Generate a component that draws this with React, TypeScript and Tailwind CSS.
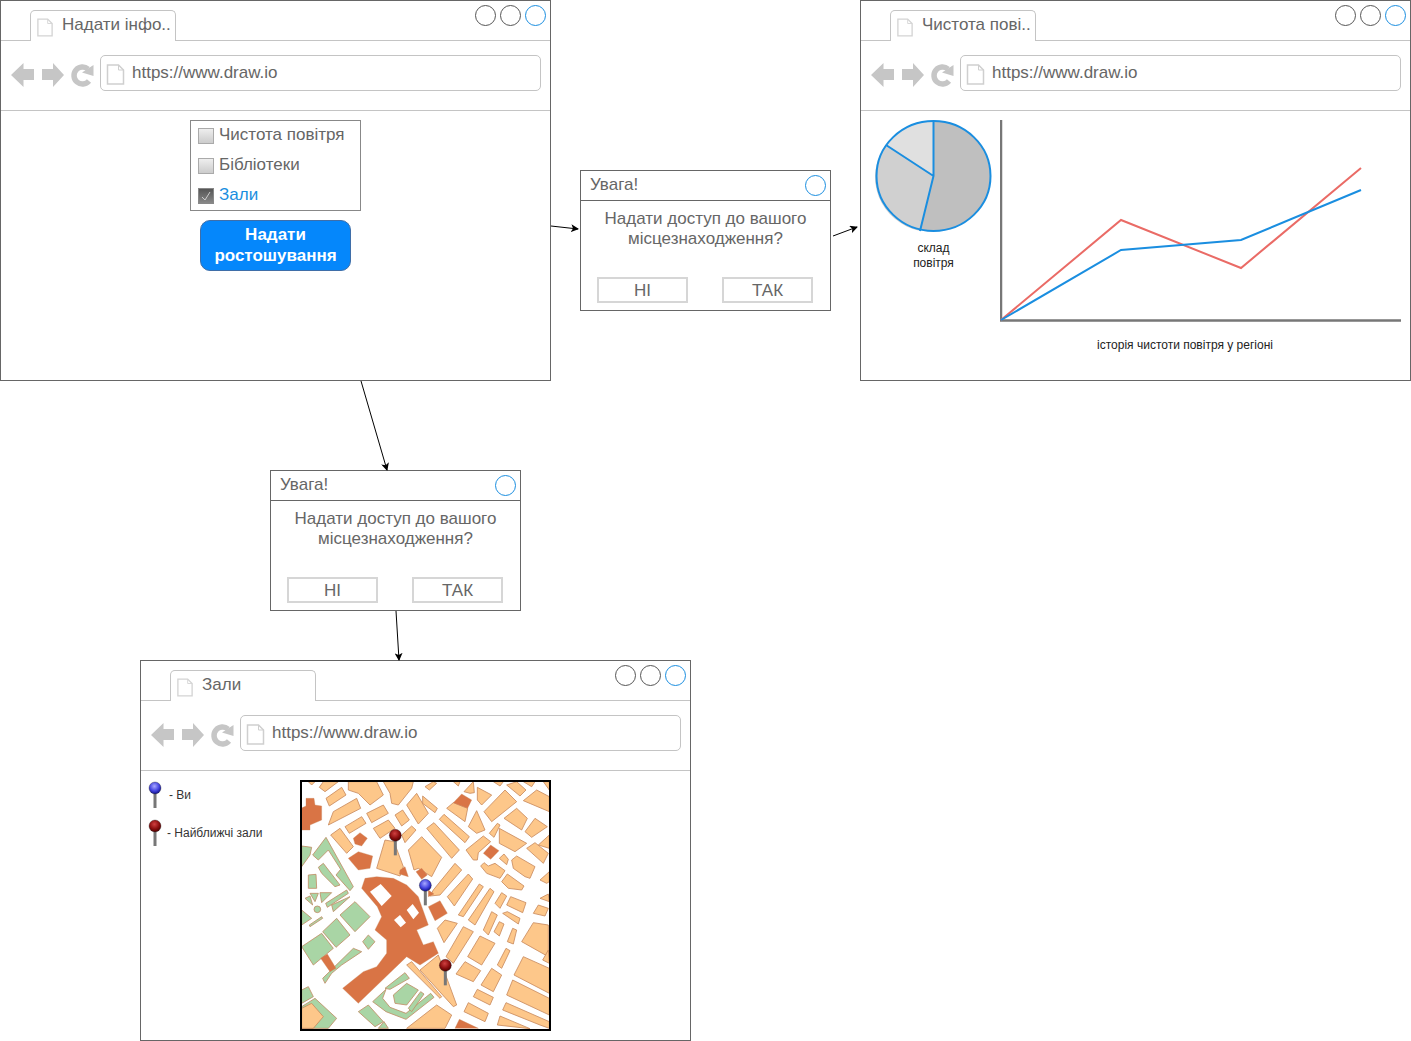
const font = '[font-family:"Liberation_Sans",Arial,sans-serif]'

function DocIcon({ className, color = '#d4d4d4' }: { className: string; color?: string }) {
  return (
    <svg className={className} viewBox="0 0 18 21" fill="none">
      <path d="M1 1H12L17 6V20H1Z" fill="#fff" stroke={color} strokeWidth="1.5" />
      <path d="M12 1V6H17" stroke={color} strokeWidth="1" />
    </svg>
  )
}

function NavIcons() {
  return (
    <svg className="shrink-0" width="89" height="30" viewBox="0 0 89 30" fill="#c6c6c6">
      <path d="M0 15 12.500 3V9H23V20H12.500V27Z" />
      <path d="M31 9H42V3L53 15 42 27V20H31Z" />
      <path d="M77 9A8.500 8.500 0 1 0 78 21" fill="none" stroke="#c6c6c6" strokeWidth="5.500" />
      <path d="M71 12.500 82.500 5V16Z" />
    </svg>
  )
}

function BrowserWindow({
  className,
  title,
  children,
}: {
  className: string
  title: string
  children: React.ReactNode
}) {
  return (
    <div className={`absolute flex flex-col border border-[#666] bg-white ${className}`}>
      <div className="relative flex h-[40px] shrink-0 border-b border-[#c4c4c4]">
        <div className="z-10 ml-[29px] mt-[9px] flex h-[31px] w-[146px] items-center gap-[9px] rounded-t-[5px] border border-b-0 border-[#c4c4c4] bg-white pl-[6px]">
          <DocIcon className="h-[21px] w-[16px] shrink-0 translate-y-[1px]" />
          <span className="mb-[4px] whitespace-nowrap text-[17px] leading-none text-[#666]">{title}</span>
        </div>
        <div className="absolute right-[4px] top-[4px] flex gap-[4px]">
          <span className="size-[21px] rounded-full border border-[#555]" />
          <span className="size-[21px] rounded-full border border-[#555]" />
          <span className="size-[21px] rounded-full border border-[#1a8ee0]" />
        </div>
      </div>
      <div className="flex h-[70px] shrink-0 items-start gap-0 border-b border-[#c4c4c4] pl-[10px] pt-[14px]">
        <div className="mt-[5px] flex h-[30px] w-[89px]">
          <NavIcons />
        </div>
        <div className="flex h-[36px] w-[441px] items-center gap-[7px] rounded-[5px] border border-[#c4c4c4] bg-white pl-[5px]">
          <DocIcon className="h-[21px] w-[19px] shrink-0 translate-y-[1px]" color="#cfcfcf" />
          <span className="mb-[2px] text-[17px] leading-none text-[#666]">https://www.draw.io</span>
        </div>
      </div>
      <div className="min-h-0 flex-1">{children}</div>
    </div>
  )
}

function AlertDialog({ className }: { className: string }) {
  return (
    <div className={`absolute flex flex-col border border-[#666] bg-white ${className}`}>
      <div className="flex h-[30px] shrink-0 items-center justify-between border-b border-[#666] pl-[9px] pr-[4px]">
        <span className="mb-[2px] text-[17px] leading-none text-[#666]">Увага!</span>
        <span className="size-[21px] rounded-full border border-[#1a8ee0]" />
      </div>
      <p className="mt-[8px] text-center text-[17px] leading-[20px] text-[#666]">
        Надати доступ до вашого
        <br />
        місцезнаходження?
      </p>
      <div className="mt-[28px] flex justify-between pl-[16px] pr-[17px]">
        <button className="flex h-[26px] w-[91px] items-center justify-center border-2 border-[#d6d6d6] pt-[2px] text-[17px] text-[#666]">
          НІ
        </button>
        <button className="flex h-[26px] w-[91px] items-center justify-center border-2 border-[#d6d6d6] pt-[2px] text-[17px] text-[#666]">
          ТАК
        </button>
      </div>
    </div>
  )
}

function CheckItem({ label, checked }: { label: string; checked?: boolean }) {
  return (
    <div className="flex h-[30px] items-center gap-[5px] pl-[7px]">
      {checked ? (
        <span className="flex size-[16px] items-center justify-center border border-[#888] bg-gradient-to-b from-[#555] to-[#888]">
          <svg width="12" height="12" viewBox="0 0 12 12" fill="none">
            <path d="M2 7 5 10 10 2" stroke="#ccc" strokeWidth="1" />
          </svg>
        </span>
      ) : (
        <span className="size-[16px] border border-[#aaa] bg-gradient-to-b from-[#eee] to-[#ccc]" />
      )}
      <span className={`mb-[4px] text-[17px] leading-none ${checked ? 'text-[#1a8ee0]' : 'text-[#666]'}`}>{label}</span>
    </div>
  )
}

const light = [
  '55,35 75,35 65,45', '100,35 145,35 105,65 88,52', '175,35 260,35 280,75 240,105 205,70 175,60',
  '280,35 370,35 365,55 325,105 305,100 300,70', '405,50 430,35 440,40 418,60', '490,35 510,35 505,48',
  '522,65 550,35 553,68 540,70', '562,52 605,75 575,105 562,90', '610,35 640,35 630,48',
  '650,45 680,35 708,60 690,78', '700,35 735,35 725,50', '760,35 778,35 778,60',
  '582,125 645,60 680,95 605,155', '700,92 740,60 778,80 778,125', '642,145 680,115 712,145 695,180',
  '705,185 735,145 772,170 725,202', '745,225 778,195 778,235', '108,85 155,52 168,75 118,108',
  '115,165 130,125 200,85 212,115', '230,130 280,105 295,130 245,158', '165,170 215,140 228,160 178,190',
  '250,175 295,150 315,175 270,205', '315,135 338,120 358,150 335,168', '122,195 150,175 190,230 170,250',
  '335,195 365,168 378,180 345,218', '350,105 380,70 415,130 385,162', '398,78 442,115 435,128 398,100',
  '470,115 490,98 533,115 525,155', '448,148 462,133 538,200 525,218', '410,175 432,158 508,240 485,265',
  '355,240 395,200 455,262 425,320 385,295 372,300', '260,295 285,210 312,215 340,290 330,318',
  '535,170 560,122 585,180 560,190', '528,240 580,198 602,215 565,248 562,270 550,270', '598,190 622,160 630,165 612,202',
  '628,175 710,220 675,245 628,220', '628,265 642,252 655,268 650,284', '665,270 680,258 735,290 720,325 705,320 670,295',
  '710,235 735,218 775,250 760,280', '572,288 582,278 595,288 615,280 645,302 630,325 590,310',
  '635,335 652,312 702,348 695,360 655,355', '750,330 778,305 778,335 770,340', '750,385 775,372 778,395',
  '430,360 495,280 515,300 450,375 420,378', '472,380 535,312 548,327 493,408', '505,435 568,342 580,350 520,440',
  '535,450 600,355 612,365 555,465', '615,400 635,368 650,378 630,415', '650,405 662,380 708,398 698,428',
  '730,430 745,405 775,415 765,438', '580,480 605,425 622,435 595,495', '638,430 652,425 690,445 685,462',
  '612,485 628,455 642,462 628,498', '652,515 668,475 680,480 670,522', '695,515 730,458 775,465 775,560',
  '442,475 465,450 502,460 462,518', '468,560 520,470 550,485 490,580', '533,560 570,498 615,520 575,585',
  '622,585 648,535 660,542 635,595', '758,570 775,540 778,580', '498,612 525,575 572,602 550,635',
  '573,645 605,595 635,615 610,665', '672,615 700,560 778,595 778,670', '550,680 562,658 610,682 600,705',
  '650,675 668,630 778,685 778,735', '638,720 648,698 778,755 778,775 750,765', '522,725 535,698 595,730 585,755',
  '622,765 630,738 720,776', '350,585 365,575 455,680 450,685', '390,600 445,555 500,705 490,710',
  '350,775 440,705 485,735 465,775',
]

const dark = [
  '190,205 210,188 232,205 215,228 195,222', '175,265 205,245 248,258 240,295 205,300',
  '33,115 48,108 48,85 72,85 75,105 95,108 95,150 60,165 60,180 33,180', '580,250 602,225 627,242 602,268',
  '415,410 450,392 472,430 435,452', '378,305 395,295 412,315 395,328', '330,300 345,290 355,320 328,312',
  '415,360 432,372 415,380', '495,775 508,748 565,775', '490,98 515,72 545,90 533,115',
  '215,355 225,325 260,320 310,325 350,345 385,380 390,395 415,465 380,480 400,525 430,515 445,550 390,585 350,560 205,700 158,655 220,605 260,590 290,550 290,510 255,480 275,440 262,410',
  '92,565 112,552 138,595 120,605',
]

const holes = ['240,365 272,342 305,378 275,408', '312,450 330,435 348,458 332,472', '350,420 368,402 387,428 370,448']

const green = [
  '35,228 65,232 60,255 35,290', '68,255 108,202 190,350 180,362 138,315 152,298 115,240 85,270',
  '85,292 100,280 150,345 135,350 95,310', '55,315 78,313 80,355 55,355', '60,370 85,370 75,395',
  '90,368 125,368 95,398', '107,400 170,360 175,370 112,412', '125,405 180,380 130,425', '35,420 65,445 35,465',
  '58,465 95,440 98,445 60,470', '45,385 60,378 68,405', '150,435 195,395 240,440 195,485',
  '98,485 140,445 180,495 138,532', '35,530 95,490 130,535 70,585', '218,515 235,495 255,515 235,538',
  '98,625 190,535 215,545 155,585 125,610 105,640', '35,660 55,650 70,680 35,700',
  '285,655 345,608 358,625 300,658', '310,675 350,640 385,660 350,705 315,700', '205,725 235,705 280,755 255,770',
  '248,695 288,658 278,685 300,712 348,730 422,670 432,682 348,748 288,725', '355,715 392,665 402,672 365,725',
  '265,775 282,755 295,775', '35,710 75,685 140,745 115,775 35,775',
]

function MapPin({ x, y, fill }: { x: number; y: number; fill: string }) {
  return (
    <g transform={`translate(${x} ${y})`}>
      <rect x="-4.500" y="8" width="9" height="52" fill="#777" />
      <circle r="18" fill={fill} stroke="#222" strokeWidth="1" />
    </g>
  )
}

function PinGradients() {
  return (
    <defs>
      <radialGradient id="pinRed" cx="45%" cy="35%" r="65%">
        <stop offset="0%" stopColor="#d04040" />
        <stop offset="60%" stopColor="#8c0f0f" />
        <stop offset="100%" stopColor="#4d0000" />
      </radialGradient>
      <radialGradient id="pinBlue" cx="45%" cy="35%" r="65%">
        <stop offset="0%" stopColor="#a8a8ff" />
        <stop offset="60%" stopColor="#4444e0" />
        <stop offset="100%" stopColor="#101088" />
      </radialGradient>
    </defs>
  )
}

function CityMap() {
  return (
    <svg className="block" width="247" height="247" viewBox="36 36 741 741">
      <PinGradients />
      {green.map((p) => (
        <polygon key={p} points={p} fill="#a9d5a5" stroke="#c08e66" strokeWidth="2.500" />
      ))}
      <circle cx="82" cy="418" r="10" fill="#a9d5a5" stroke="#c08e66" strokeWidth="2.500" />
      <polygon points="35,715 65,700 100,740 70,775 35,775" fill="#fdc78a" stroke="#c98a5e" strokeWidth="2.500" />
      {light.map((p) => (
        <polygon key={p} points={p} fill="#fdc78a" stroke="#c98a5e" strokeWidth="2.500" />
      ))}
      {dark.map((p) => (
        <polygon key={p} points={p} fill="#d97445" stroke="#c98a5e" strokeWidth="1" />
      ))}
      {holes.map((p) => (
        <polygon key={p} points={p} fill="#fff" />
      ))}
      <MapPin x={316} y={196} fill="url(#pinRed)" />
      <MapPin x={406} y={346} fill="url(#pinBlue)" />
      <MapPin x={466} y={586} fill="url(#pinRed)" />
    </svg>
  )
}

function LegendPin({ fill }: { fill: string }) {
  return (
    <svg width="14" height="28" viewBox="-21 -21 42 84" className="shrink-0">
      <PinGradients />
      <MapPin x={0} y={0} fill={fill} />
    </svg>
  )
}

function AirCharts() {
  return (
    <div className="flex h-full pl-[14px] pt-[9px]">
      <div className="flex w-[117px] shrink-0 flex-col items-center">
        <svg width="117" height="112" viewBox="0 0 117 112">
          <ellipse cx="58.500" cy="56" rx="57.500" ry="55" fill="#bfbfbf" />
          <path d="M58.500 56 45 111A57.500 55 0 0 1 11 25Z" fill="#d0d0d0" />
          <path d="M58.500 56 11 25A57.500 55 0 0 1 58.500 1Z" fill="#e0e0e0" />
          <ellipse cx="58.500" cy="56" rx="57" ry="55" fill="none" stroke="#1a8ee0" strokeWidth="2" />
          <path d="M58.500 1V56L45 111M58.500 56 11 25" fill="none" stroke="#1a8ee0" strokeWidth="2" />
        </svg>
        <p className="mt-[9px] text-center text-[12px] leading-[15px] text-[#222]">
          склад
          <br />
          повітря
        </p>
      </div>
      <div className="ml-[8px] flex flex-col">
        <svg width="402" height="202" viewBox="0 0 402 202" fill="none">
          <path d="M1 0V200.500H401" stroke="#777" strokeWidth="2.500" />
          <path d="M1 200 121 100 241 148 361 48" stroke="#ea6b66" strokeWidth="2" />
          <path d="M1 200 121 130 241 120 361 70" stroke="#1a8ee0" strokeWidth="2" />
        </svg>
        <p className="mt-[16px] w-[370px] text-center text-[12px] leading-[15px] text-[#222]">
          історія чистоти повітря у регіоні
        </p>
      </div>
    </div>
  )
}

export default function App() {
  return (
    <div className={`relative h-[1041px] w-[1411px] overflow-hidden bg-white ${font}`}>
      <BrowserWindow className="left-0 top-0 h-[381px] w-[551px]" title="Надати інфо..">
        <div className="flex flex-col items-center pt-[9px]">
          <div className="h-[91px] w-[171px] border border-[#888]">
            <CheckItem label="Чистота повітря" />
            <CheckItem label="Бібліотеки" />
            <CheckItem label="Зали" checked />
          </div>
          <button className="mt-[9px] flex h-[51px] w-[151px] items-center justify-center rounded-[10px] border border-[#3f6ea8] bg-[#0587fb] pb-[2px] text-center text-[17px] font-bold leading-[21px] text-white">
            Надати
            <br />
            ростошування
          </button>
        </div>
      </BrowserWindow>

      <BrowserWindow className="left-[860px] top-0 h-[381px] w-[551px]" title="Чистота пові..">
        <AirCharts />
      </BrowserWindow>

      <BrowserWindow className="left-[140px] top-[660px] h-[381px] w-[551px]" title="Зали">
        <div className="flex h-full pt-[9px]">
          <div className="flex w-[159px] shrink-0 flex-col gap-[10px] pl-[7px] pt-[1px] text-[12px] leading-none text-[#333]">
            <div className="flex items-center gap-[7px]">
              <LegendPin fill="url(#pinBlue)" />
              <span>- Ви</span>
            </div>
            <div className="flex items-center gap-[5px]">
              <LegendPin fill="url(#pinRed)" />
              <span>- Найближчі зали</span>
            </div>
          </div>
          <div className="h-[251px] w-[251px] shrink-0 border-2 border-black bg-white">
            <CityMap />
          </div>
        </div>
      </BrowserWindow>

      <AlertDialog className="left-[580px] top-[170px] h-[141px] w-[251px]" />
      <AlertDialog className="left-[270px] top-[470px] h-[141px] w-[251px]" />

      <svg className="pointer-events-none absolute inset-0 z-20" width="1411" height="1041" fill="none">
        <defs>
          <marker id="arrowHead" markerWidth="8" markerHeight="8" refX="7" refY="4" orient="auto" markerUnits="userSpaceOnUse">
            <path d="M0 0 8 4 0 8 2 4Z" fill="#000" />
          </marker>
        </defs>
        <path d="M551 226 578 229" stroke="#000" markerEnd="url(#arrowHead)" />
        <path d="M833 236 857 227" stroke="#000" markerEnd="url(#arrowHead)" />
        <path d="M361 381 387 470" stroke="#000" markerEnd="url(#arrowHead)" />
        <path d="M396 611 399 660" stroke="#000" markerEnd="url(#arrowHead)" />
      </svg>
    </div>
  )
}
